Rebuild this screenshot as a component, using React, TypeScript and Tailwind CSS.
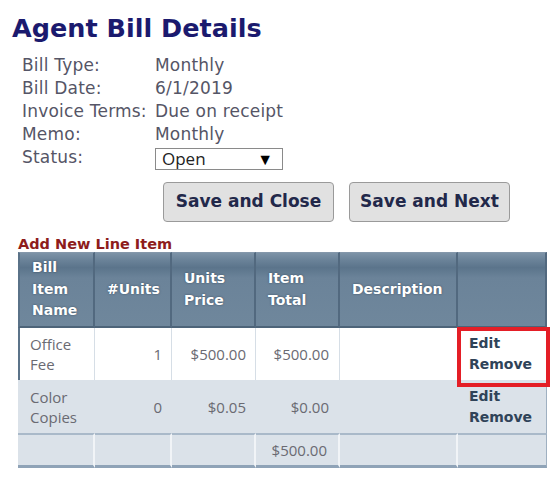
import React from "react";

const labelRows: [string, string][] = [
  ["Bill Type:", "Monthly"],
  ["Bill Date:", "6/1/2019"],
  ["Invoice Terms:", "Due on receipt"],
  ["Memo:", "Monthly"],
];

export default function App() {
  const verdana = "font-['DejaVu_Sans',Verdana,sans-serif]";
  const thCls =
    "align-middle text-left px-3 text-[14px] leading-[21.5px] font-bold text-white [text-shadow:0_0_2px_rgba(30,50,70,0.7)] bg-[linear-gradient(to_bottom,#7d93a7_0%,#6a8298_10%,#5b748b_20%,#6b8399_34%,#6f879c_100%)] border-t border-t-[#8598ab] border-r-2 border-r-[#52697f] border-b-2 border-b-[#4d6479]";
  const footCls =
    "border-t-2 border-t-[#a9b9c9] border-b-[3px] border-b-[#8fa3b7] border-r-2 border-r-[#f1f4f7]";
  return (
    <div className={`relative w-[555px] h-[478px] bg-white overflow-hidden ${verdana}`}>
      <h1 className="pl-[12px] pt-[13px] text-[25.5px] leading-[30px] font-bold text-[#1b1a6e]">
        Agent Bill Details
      </h1>

      <div className="mt-[11px] pl-[22px] text-[17px] tracking-[0.2px] text-[#555566]">
        {labelRows.map(([l, v]) => (
          <div key={l} className="flex leading-[23px]">
            <div className="w-[133px]">{l}</div>
            <div>{v}</div>
          </div>
        ))}
        <div className="flex leading-[23px]">
          <div className="w-[133px]">Status:</div>
          <div className="mt-[2px] h-[22px] w-[128px] border border-[#8a8a8a] bg-white flex items-center justify-between pl-[6px] pr-[9px] font-['Open_Sans',sans-serif] text-[17px] leading-[20px] tracking-normal text-[#222]">
            <span>Open</span>
            <span className="text-[16px] text-black">▼</span>
          </div>
        </div>
      </div>

      <div className="mt-[12px] pl-[163px] flex gap-[15px]">
        <button className="h-[40px] w-[171px] rounded-[4px] border border-[#9a9a9a] bg-[#e1e1e1] text-[17px] font-bold text-[#22284a]">
          Save and Close
        </button>
        <button className="h-[40px] w-[161px] rounded-[4px] border border-[#9a9a9a] bg-[#e1e1e1] text-[17px] font-bold text-[#22284a]">
          Save and Next
        </button>
      </div>

      <div className="mt-[14px] pl-[18px] text-[14.5px] leading-[16px] font-bold text-[#8e1c1c]">
        Add New Line Item
      </div>

      <div className="pl-[18px]">
        <table className="table-fixed w-[529px] border-separate border-spacing-0">
          <colgroup>
            <col className="w-[77px]" />
            <col className="w-[77px]" />
            <col className="w-[84px]" />
            <col className="w-[84px]" />
            <col className="w-[118px]" />
            <col className="w-[89px]" />
          </colgroup>
          <thead>
            <tr className="h-[76px]">
              <th className={`${thCls} border-l-2 border-l-[#5a7288]`}>
                Bill
                <br />
                Item
                <br />
                Name
              </th>
              <th className={thCls}>#Units</th>
              <th className={thCls}>
                Units
                <br />
                Price
              </th>
              <th className={thCls}>
                Item
                <br />
                Total
              </th>
              <th className={thCls}>Description</th>
              <th className={`${thCls} border-r-[#6f8499]`}></th>
            </tr>
          </thead>
          <tbody className="font-['Open_Sans',sans-serif] text-[15px] leading-[20px] text-[#6a6a72]">
            <tr className="h-[52px] bg-white">
              <td className="align-middle pl-[10px] border-l-2 border-l-[#5b7389] border-r border-r-[#d6dee6]">
                Office
                <br />
                Fee
              </td>
              <td className="align-middle text-right pr-[9px] border-r border-r-[#d6dee6]">1</td>
              <td className="align-middle text-right pr-[9px] border-r border-r-[#d6dee6]">$500.00</td>
              <td className="align-middle text-right pr-[10px] border-r border-r-[#d6dee6]">$500.00</td>
              <td className="align-middle border-r border-r-[#d6dee6]"></td>
              <td className={`relative align-middle pl-[11px] ${verdana} text-[14px] leading-[21px] font-bold text-[#2f4358]`}>
                Edit
                <br />
                Remove
                <span className="absolute left-[-1px] top-[-1px] right-[-3px] bottom-[-7px] border-4 border-[#e41e26]"></span>
              </td>
            </tr>
            <tr className="h-[53px] bg-[#dbe2e9]">
              <td className="align-middle pl-[12px]">
                Color
                <br />
                Copies
              </td>
              <td className="align-middle text-right pr-[10px]">0</td>
              <td className="align-middle text-right pr-[10px]">$0.05</td>
              <td className="align-middle text-right pr-[11px]">$0.00</td>
              <td className="align-middle"></td>
              <td className={`align-middle pl-[11px] ${verdana} text-[14px] leading-[21px] font-bold text-[#2f4358] border-r border-r-[#9fb0c1]`}>
                Edit
                <br />
                Remove
              </td>
            </tr>
            <tr className="h-[35px] bg-[#dbe2e9]">
              <td className={footCls}></td>
              <td className={footCls}></td>
              <td className={footCls}></td>
              <td className={`align-middle text-right pr-[11px] ${footCls}`}>$500.00</td>
              <td className={footCls}></td>
              <td className="border-t-2 border-t-[#a9b9c9] border-b-[3px] border-b-[#8fa3b7] border-r border-r-[#9fb0c1]"></td>
            </tr>
          </tbody>
        </table>
      </div>
    </div>
  );
}
